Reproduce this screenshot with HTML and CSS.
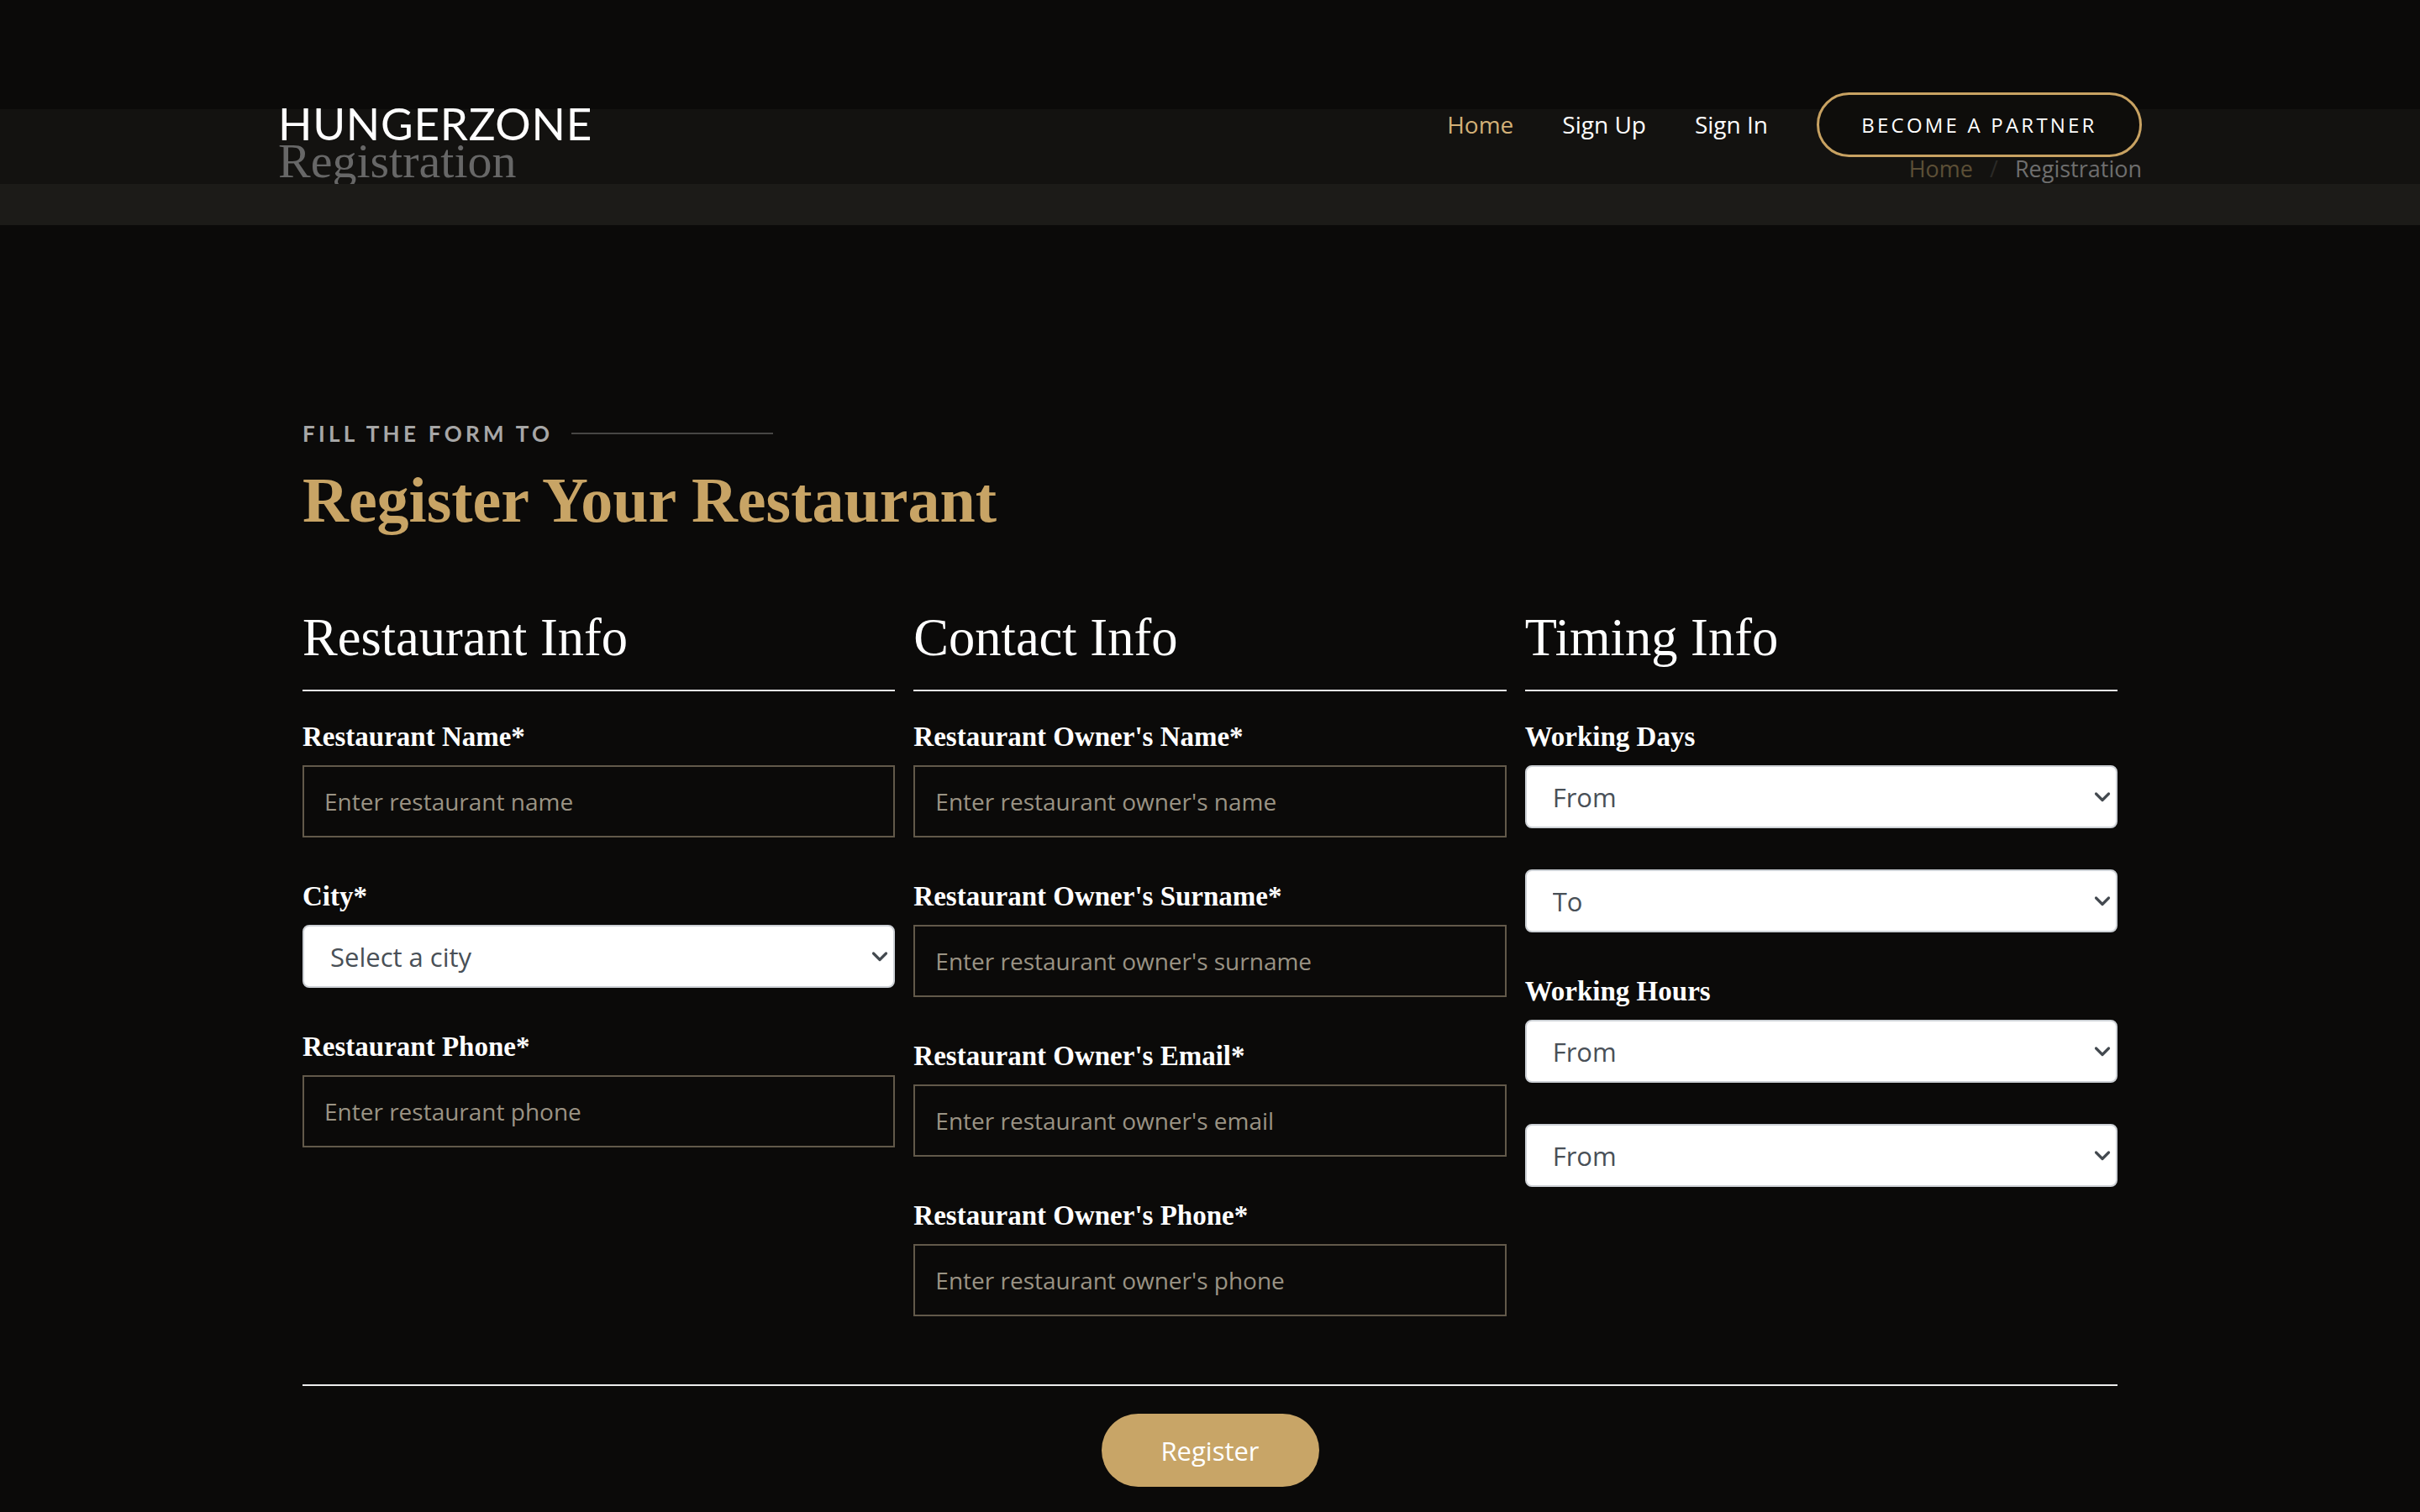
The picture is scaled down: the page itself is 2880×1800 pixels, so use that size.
FILE: index.html
```html
<!DOCTYPE html>
<html lang="en">
<head>
<meta charset="utf-8">
<title>HungerZone - Registration</title>
<link rel="stylesheet" href="styles.css">
</head>
<body>
<header class="page-header">
  <div class="header-top">
    <div class="container">
      <nav class="navbar">
        <a class="brand" href="#">HUNGERZONE</a>
        <ul class="nav-links">
          <li><a class="nav-link active" href="#">Home</a></li>
          <li><a class="nav-link" href="#">Sign Up</a></li>
          <li><a class="nav-link" href="#">Sign In</a></li>
          <li><a class="btn-partner" href="#">BECOME A PARTNER</a></li>
        </ul>
      </nav>
      <div class="title-row">
        <h1 class="page-title">Registration</h1>
        <ol class="breadcrumb">
          <li class="crumb crumb-home">Home</li>
          <li class="crumb-sep">/</li>
          <li class="crumb crumb-current">Registration</li>
        </ol>
      </div>
    </div>
  </div>
  <div class="header-strip"></div>
</header>

<main class="register">
  <div class="inner">
    <div class="eyebrow">
      <span class="eyebrow-text">FILL THE FORM TO</span>
      <span class="eyebrow-line"></span>
    </div>
    <h2 class="section-title">Register Your Restaurant</h2>

    <form class="reg-form">
      <div class="form-grid">
        <div class="form-col">
          <h3 class="col-title">Restaurant Info</h3>
          <div class="group">
            <label class="field-label">Restaurant Name*</label>
            <input class="field-input" type="text" placeholder="Enter restaurant name">
          </div>
          <div class="group">
            <label class="field-label">City*</label>
            <div class="select-wrap">
              <select class="field-select"><option>Select a city</option></select>
              <svg class="chev" width="20" height="13" viewBox="0 0 20 13"><path d="M2.5 2.5 L10 10 L17.5 2.5" fill="none" stroke="#444a50" stroke-width="3.2" stroke-linecap="round" stroke-linejoin="round"/></svg>
            </div>
          </div>
          <div class="group">
            <label class="field-label">Restaurant Phone*</label>
            <input class="field-input" type="text" placeholder="Enter restaurant phone">
          </div>
        </div>

        <div class="form-col">
          <h3 class="col-title">Contact Info</h3>
          <div class="group">
            <label class="field-label">Restaurant Owner's Name*</label>
            <input class="field-input" type="text" placeholder="Enter restaurant owner's name">
          </div>
          <div class="group">
            <label class="field-label">Restaurant Owner's Surname*</label>
            <input class="field-input" type="text" placeholder="Enter restaurant owner's surname">
          </div>
          <div class="group">
            <label class="field-label">Restaurant Owner's Email*</label>
            <input class="field-input" type="text" placeholder="Enter restaurant owner's email">
          </div>
          <div class="group">
            <label class="field-label">Restaurant Owner's Phone*</label>
            <input class="field-input" type="text" placeholder="Enter restaurant owner's phone">
          </div>
        </div>

        <div class="form-col">
          <h3 class="col-title">Timing Info</h3>
          <div class="group">
            <label class="field-label">Working Days</label>
            <div class="select-wrap">
              <select class="field-select"><option>From</option></select>
              <svg class="chev" width="20" height="13" viewBox="0 0 20 13"><path d="M2.5 2.5 L10 10 L17.5 2.5" fill="none" stroke="#444a50" stroke-width="3.2" stroke-linecap="round" stroke-linejoin="round"/></svg>
            </div>
            <div class="select-wrap stacked">
              <select class="field-select"><option>To</option></select>
              <svg class="chev" width="20" height="13" viewBox="0 0 20 13"><path d="M2.5 2.5 L10 10 L17.5 2.5" fill="none" stroke="#444a50" stroke-width="3.2" stroke-linecap="round" stroke-linejoin="round"/></svg>
            </div>
          </div>
          <div class="group">
            <label class="field-label">Working Hours</label>
            <div class="select-wrap">
              <select class="field-select"><option>From</option></select>
              <svg class="chev" width="20" height="13" viewBox="0 0 20 13"><path d="M2.5 2.5 L10 10 L17.5 2.5" fill="none" stroke="#444a50" stroke-width="3.2" stroke-linecap="round" stroke-linejoin="round"/></svg>
            </div>
            <div class="select-wrap stacked">
              <select class="field-select"><option>From</option></select>
              <svg class="chev" width="20" height="13" viewBox="0 0 20 13"><path d="M2.5 2.5 L10 10 L17.5 2.5" fill="none" stroke="#444a50" stroke-width="3.2" stroke-linecap="round" stroke-linejoin="round"/></svg>
            </div>
          </div>
        </div>
      </div>

      <div class="form-footer">
        <button class="btn-register" type="button">Register</button>
      </div>
    </form>
  </div>
</main>
</body>
</html>
```

FILE: styles.css
```css
* { box-sizing: border-box; }

html, body {
  margin: 0;
  padding: 0;
  background: #0b0a09;
  font-family: "Open Sans", "Liberation Sans", sans-serif;
  color: #fff;
}

a { text-decoration: none; color: inherit; }

/* ---------- Header ---------- */
.header-top {
  height: 219px;
  overflow: hidden;
  padding-top: 110px;
  background: linear-gradient(to bottom, #0b0a09 0, #0b0a09 130px, #131210 130px, #131210 100%);
}

.container {
  width: 2218px;
  margin: 0 auto;
}

.navbar {
  display: flex;
  justify-content: space-between;
  align-items: center;
  height: 77px;
}

.brand {
  font-family: "Lato", "Open Sans", sans-serif;
  font-weight: 400;
  font-size: 53px;
  line-height: 77px;
  color: #fff;
  letter-spacing: 0.7px;
  position: relative;
  top: -2px;
}

.nav-links {
  display: flex;
  align-items: center;
  gap: 58px;
  list-style: none;
  margin: 0;
  padding: 0;
}

.nav-link {
  font-size: 28px;
  line-height: 77px;
  color: #fff;
}

.nav-link.active { color: #d2b077; }

.btn-partner {
  display: flex;
  align-items: center;
  justify-content: center;
  width: 387px;
  height: 77px;
  border: 3px solid #c8a262;
  border-radius: 40px;
  background: #0e0d0b;
  font-size: 24px;
  letter-spacing: 3.2px;
  color: #fff;
}

.title-row {
  display: flex;
  justify-content: space-between;
  align-items: baseline;
  margin-top: -24px;
}

.page-title {
  margin: 0;
  font-family: "Liberation Serif", "Times New Roman", serif;
  font-weight: 400;
  font-size: 58px;
  line-height: 57px;
  color: #676767;
}

.breadcrumb {
  display: flex;
  list-style: none;
  margin: 0;
  padding: 0;
  font-size: 27px;
}

.crumb-home { color: #5c4f36; }
.crumb-sep { color: #2b2a27; margin: 0 20px; }
.crumb-current { color: #6e6e6e; }

.header-strip {
  height: 49px;
  background: #1c1b18;
}

/* ---------- Main ---------- */
.register {
  padding-top: 233px;
  background: #0b0a09;
}

.inner {
  width: 2160px;
  margin: 0 auto;
}

.eyebrow {
  display: flex;
  align-items: center;
  gap: 22px;
  height: 30px;
}

.eyebrow-text {
  font-family: "Lato", "Open Sans", sans-serif;
  font-weight: 700;
  font-size: 26px;
  line-height: 30px;
  letter-spacing: 4.3px;
  color: #a7a7a7;
}

.eyebrow-line {
  width: 240px;
  height: 2px;
  background: #474644;
}

.section-title {
  margin: 19px 0 0;
  font-family: "Liberation Serif", "Times New Roman", serif;
  font-weight: 700;
  font-size: 76px;
  line-height: 90px;
  color: #c8a465;
}

.form-grid {
  display: grid;
  grid-template-columns: repeat(3, 1fr);
  column-gap: 22px;
  margin-top: 82px;
}

.col-title {
  margin: 0 0 36px;
  padding-bottom: 25px;
  border-bottom: 2px solid #f0f0f0;
  font-family: "Liberation Serif", "Times New Roman", serif;
  font-weight: 400;
  font-size: 62.5px;
  line-height: 74px;
  color: #fff;
}

.group { margin-bottom: 52px; }

.field-label {
  display: block;
  margin-bottom: 16px;
  font-family: "Liberation Serif", "Times New Roman", serif;
  font-weight: 700;
  font-size: 33px;
  line-height: 36px;
  color: #fff;
}

.field-input {
  display: block;
  width: 100%;
  height: 86px;
  padding: 0 24px;
  border: 2px solid #62594a;
  border-radius: 0;
  background: transparent;
  color: #fff;
  font-family: "Open Sans", sans-serif;
  font-size: 28px;
  outline: none;
}

.field-input::placeholder { color: #9a9384; opacity: 1; }

.select-wrap {
  position: relative;
}

.select-wrap.stacked { margin-top: 49px; }

.field-select {
  display: block;
  width: 100%;
  height: 75px;
  padding: 0 60px 0 31px;
  border: 2px solid #cdd1d6;
  border-radius: 8px;
  background: #fff;
  color: #495057;
  font-family: "Open Sans", sans-serif;
  font-size: 31px;
  -webkit-appearance: none;
  appearance: none;
  outline: none;
}

.chev {
  position: absolute;
  right: 8px;
  top: 50%;
  transform: translateY(-50%);
  pointer-events: none;
}

.form-footer {
  margin-top: 29px;
  border-top: 2px solid #ededed;
  padding-top: 33px;
  display: flex;
  justify-content: center;
}

.btn-register {
  width: 259px;
  height: 87px;
  border: none;
  border-radius: 44px;
  background: #c8a567;
  color: #fff;
  font-family: "Open Sans", sans-serif;
  font-size: 31px;
  cursor: pointer;
}
```
